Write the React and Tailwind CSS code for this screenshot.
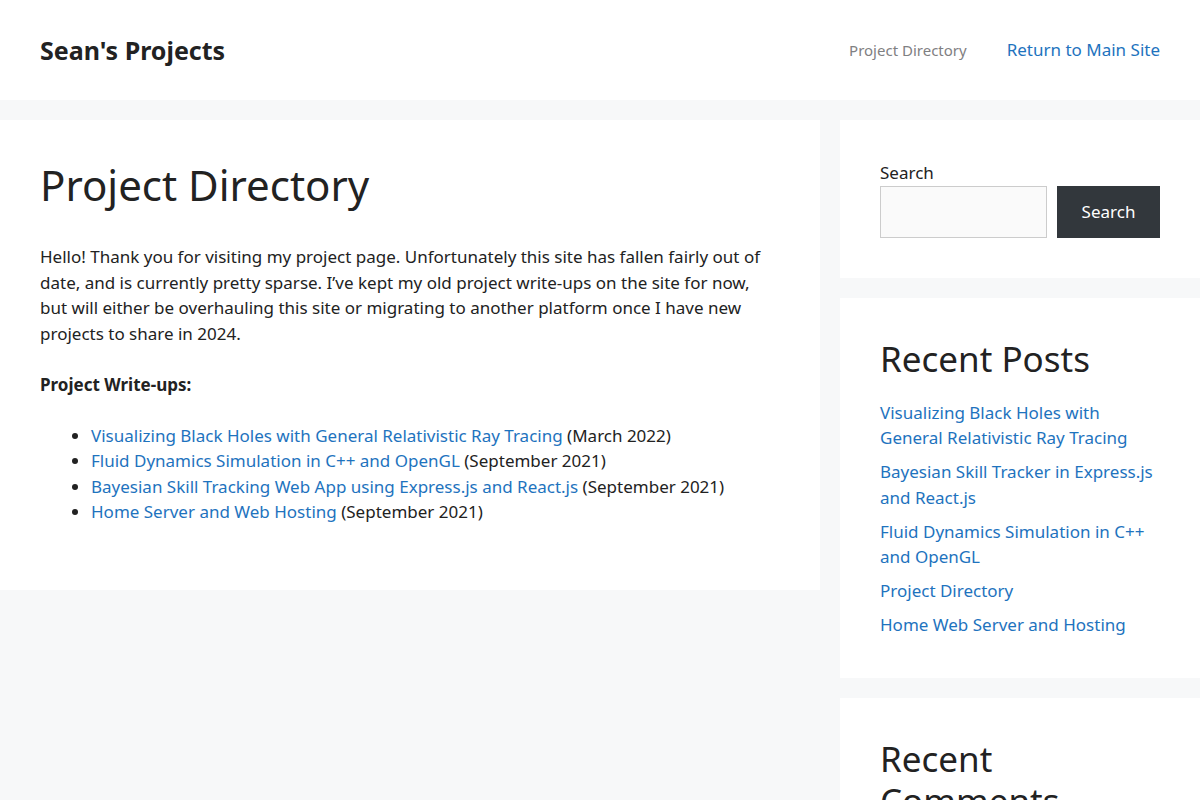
import React from "react";

const writeups = [
  { title: "Visualizing Black Holes with General Relativistic Ray Tracing", date: "(March 2022)" },
  { title: "Fluid Dynamics Simulation in C++ and OpenGL", date: "(September 2021)" },
  { title: "Bayesian Skill Tracking Web App using Express.js and React.js", date: "(September 2021)" },
  { title: "Home Server and Web Hosting", date: "(September 2021)" },
];

const recentPosts = [
  "Visualizing Black Holes with General Relativistic Ray Tracing",
  "Bayesian Skill Tracker in Express.js and React.js",
  "Fluid Dynamics Simulation in C++ and OpenGL",
  "Project Directory",
  "Home Web Server and Hosting",
];

const App = () => {
  return (
    <div className="min-h-[800px] bg-[#f7f8f9] text-[#222222] text-[17px] leading-[1.5] font-['Noto_Sans',sans-serif]">
      {/* Header */}
      <header className="bg-white">
        <div className="flex items-center justify-between h-[100px] px-10">
          <div className="text-[25px] font-bold leading-[1.5] mt-[1px]">Sean's Projects</div>
          <nav className="flex items-center gap-10">
            <a className="text-[15px] text-[#7f8082]">Project Directory</a>
            <a className="text-[17px] text-[#1e73be]">Return to Main Site</a>
          </nav>
        </div>
      </header>

      <div className="flex items-start gap-5 pt-5">
        {/* Main content */}
        <main className="w-[820px] bg-white p-10">
          <h1 className="text-[42px] leading-[1.2] font-normal">Project Directory</h1>
          <div className="mt-[34px]">
            <p className="mb-[25.5px]">
              Hello! Thank you for visiting my project page. Unfortunately this site has fallen fairly out of date, and
              is currently pretty sparse. I’ve kept my old project write-ups on the site for now, but will either be
              overhauling this site or migrating to another platform once I have new projects to share in 2024.
            </p>
            <p className="mb-[25.5px] font-bold">Project Write-ups:</p>
            <ul className="list-disc ml-[51px] mb-[25.5px]">
              {writeups.map((w) => (
                <li key={w.title}>
                  <a className="text-[#1e73be]">{w.title}</a> {w.date}
                </li>
              ))}
            </ul>
          </div>
        </main>

        {/* Sidebar */}
        <aside className="w-[360px] flex flex-col gap-5">
          <section className="bg-white p-10">
            <label className="block">Search</label>
            <div className="flex gap-[10px]">
              <input className="w-[167px] h-[52px] bg-[#fafafa] border border-[#cccccc] px-3 outline-none" />
              <button className="w-[103px] h-[52px] bg-[#32373c] text-white text-[17px]">Search</button>
            </div>
          </section>

          <section className="bg-white p-10">
            <h2 className="text-[35px] leading-[1.2] font-normal mb-5">Recent Posts</h2>
            <ul className="flex flex-col gap-[8.5px]">
              {recentPosts.map((p) => (
                <li key={p}>
                  <a className="text-[#1e73be]">{p}</a>
                </li>
              ))}
            </ul>
          </section>

          <section className="bg-white p-10">
            <h2 className="text-[35px] leading-[1.2] font-normal mb-5 w-[200px]">Recent Comments</h2>
            <p>No comments to show.</p>
          </section>
        </aside>
      </div>
    </div>
  );
};

export default App;
